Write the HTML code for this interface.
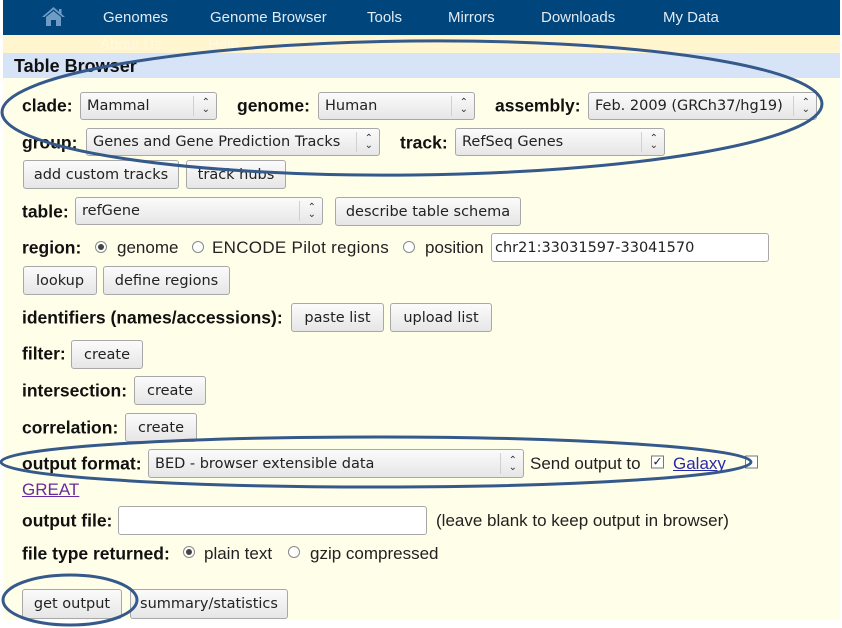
<!DOCTYPE html>
<html><head><meta charset="utf-8"><style>
*{margin:0;padding:0;box-sizing:border-box}
body{width:842px;height:628px;background:#fff;position:relative;overflow:hidden;font-family:"Liberation Sans",sans-serif}
.a{position:absolute;white-space:nowrap}
#nav{left:3px;top:0;width:837px;height:35px;background:#00457b}
#nav span{position:absolute;top:9px;color:#e2ebf3;font-size:15px}
#ys{left:3px;top:35px;width:837px;height:18px;background:#fff6cf}
#hd{left:3px;top:53px;width:837px;height:25px;background:#d7e3f7}
#bd{left:3px;top:78px;width:837px;height:542px;background:#fffee9}
.l{font-weight:bold;font-size:17.5px;color:#111;transform:translateY(-45%)}
.t{font-size:17px;color:#222;transform:translateY(-45%)}
.s,.b,.i{border:1px solid #a8a8a8;border-radius:3px;background:linear-gradient(#fbfbfb,#e6e6e6);font-family:"DejaVu Sans",sans-serif;font-size:14.5px;color:#222;padding-left:6px;display:flex;align-items:center}
.b{justify-content:center;padding:0}
.i{background:#fff}
.s:after{content:"";position:absolute;right:22px;top:3px;bottom:3px;border-left:1px solid #d0d0d0}
.s i{position:absolute;right:6px;top:50%;transform:translateY(-50%);font-style:normal;font-size:10px;line-height:7px;color:#333;text-align:center}
.r{width:12px;height:12px;border:1px solid #888;border-radius:50%;background:#fff;transform:translateY(-50%)}
.r.on:after{content:"";position:absolute;left:2px;top:2px;width:6px;height:6px;border-radius:50%;background:#444}
.c{width:13px;height:13px;border:1px solid #777;background:#fff;transform:translateY(-50%);font-size:12px;line-height:11px;text-align:center;color:#222}
</style></head><body>
<div class="a" id="nav">
<svg style="position:absolute;left:38px;top:6px" width="25" height="22" viewBox="0 0 25 22"><path d="M12.5 1 L24 11 L21.5 11 L12.5 3.5 L3.5 11 L1 11 Z" fill="#6f9bc4"/><path d="M5 11 L12.5 5 L20 11 L20 20 L15 20 L15 14 L10 14 L10 20 L5 20 Z" fill="#6f9bc4"/><rect x="18" y="3" width="2.5" height="5" fill="#6f9bc4"/></svg>
<span style="left:100px">Genomes</span><span style="left:207px">Genome Browser</span><span style="left:364px">Tools</span><span style="left:445px">Mirrors</span><span style="left:538px">Downloads</span><span style="left:660px">My Data</span>
</div>
<div class="a" id="ys"><span class="a" style="left:97px;top:1px;color:#fff;font-size:15px;opacity:.35">About Us</span><span class="a" style="left:205px;top:1px;color:#fff;font-size:15px;opacity:.35">Help</span></div>
<div class="a" id="hd"><span class="a" style="left:11px;top:3px;font-weight:bold;font-size:18px;color:#111">Table Browser</span></div>
<div class="a" id="bd"></div>

<span class="a l" style="left:22px;top:105px">clade:</span>
<div class="a s" style="left:80px;top:92px;width:137px;height:28px">Mammal<i>⌃<br>⌄</i></div>
<span class="a l" style="left:237px;top:105px">genome:</span>
<div class="a s" style="left:318px;top:92px;width:157px;height:28px">Human<i>⌃<br>⌄</i></div>
<span class="a l" style="left:495px;top:105px">assembly:</span>
<div class="a s" style="left:588px;top:92px;width:229px;height:28px">Feb. 2009 (GRCh37/hg19)<i>⌃<br>⌄</i></div>

<span class="a l" style="left:22px;top:142px">group:</span>
<div class="a s" style="left:86px;top:128px;width:294px;height:28px">Genes and Gene Prediction Tracks<i>⌃<br>⌄</i></div>
<span class="a l" style="left:400px;top:142px">track:</span>
<div class="a s" style="left:455px;top:128px;width:210px;height:28px">RefSeq Genes<i>⌃<br>⌄</i></div>

<div class="a b" style="left:23px;top:160px;width:156px;height:29px">add custom tracks</div>
<div class="a b" style="left:186px;top:160px;width:100px;height:29px">track hubs</div>

<span class="a l" style="left:22px;top:211px">table:</span>
<div class="a s" style="left:75px;top:197px;width:248px;height:28px">refGene<i>⌃<br>⌄</i></div>
<div class="a b" style="left:335px;top:197px;width:186px;height:29px">describe table schema</div>

<span class="a l" style="left:22px;top:247px">region:</span>
<div class="a r on" style="left:95px;top:247px"></div><span class="a t" style="left:117px;top:247px">genome</span>
<div class="a r" style="left:192px;top:247px"></div><span class="a t" style="left:212px;top:247px;letter-spacing:0.3px">ENCODE Pilot regions</span>
<div class="a r" style="left:403px;top:247px"></div><span class="a t" style="left:425px;top:247px">position</span>
<div class="a i" style="left:491px;top:233px;width:278px;height:29px;padding-left:3px">chr21:33031597-33041570</div>

<div class="a b" style="left:23px;top:266px;width:74px;height:29px">lookup</div>
<div class="a b" style="left:103px;top:266px;width:127px;height:29px">define regions</div>

<span class="a l" style="left:22px;top:317px">identifiers (names/accessions):</span>
<div class="a b" style="left:291px;top:303px;width:93px;height:29px">paste list</div>
<div class="a b" style="left:390px;top:303px;width:102px;height:29px">upload list</div>

<span class="a l" style="left:22px;top:353px">filter:</span>
<div class="a b" style="left:71px;top:340px;width:72px;height:29px">create</div>
<span class="a l" style="left:22px;top:390px">intersection:</span>
<div class="a b" style="left:134px;top:376px;width:72px;height:29px">create</div>
<span class="a l" style="left:22px;top:427px">correlation:</span>
<div class="a b" style="left:125px;top:413px;width:72px;height:29px">create</div>

<span class="a l" style="left:22px;top:463px">output format:</span>
<div class="a s" style="left:148px;top:449px;width:376px;height:29px">BED - browser extensible data<i>⌃<br>⌄</i></div>
<span class="a t" style="left:530px;top:463px">Send output to</span>
<div class="a c" style="left:651px;top:462px">✓</div>
<span class="a t" style="left:673px;top:463px;color:#2a2aa8;text-decoration:underline">Galaxy</span>
<div class="a c" style="left:745px;top:462px"></div>
<span class="a t" style="left:22px;top:489px;color:#6a2aa0;text-decoration:underline">GREAT</span>

<span class="a l" style="left:22px;top:520px">output file:</span>
<div class="a i" style="left:118px;top:506px;width:309px;height:29px"></div>
<span class="a t" style="left:436px;top:520px">(leave blank to keep output in browser)</span>

<span class="a l" style="left:22px;top:553px">file type returned:</span>
<div class="a r on" style="left:183px;top:552px"></div><span class="a t" style="left:204px;top:553px">plain text</span>
<div class="a r" style="left:288px;top:552px"></div><span class="a t" style="left:310px;top:553px">gzip compressed</span>

<div class="a b" style="left:22px;top:589px;width:100px;height:30px">get output</div>
<div class="a b" style="left:130px;top:589px;width:158px;height:30px">summary/statistics</div>

<svg class="a" style="left:0;top:0" width="842" height="628">
<g fill="none" stroke="#34598a" stroke-width="3">
<ellipse cx="412" cy="108" rx="410" ry="67" transform="rotate(-0.6 412 108)"/>
<ellipse cx="376" cy="462" rx="375" ry="25"/>
<ellipse cx="70" cy="600" rx="67" ry="25"/>
</g></svg>
</body></html>
